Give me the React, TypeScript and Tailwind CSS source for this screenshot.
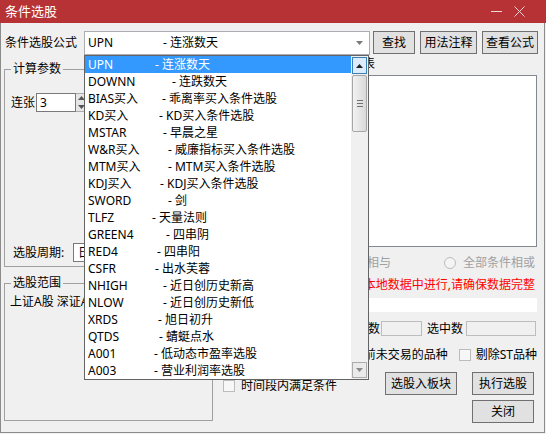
import React from "react";

// 公式列表: [代码, 说明, 说明的横向位置]
const formulas: [string, string, number][] = [
  ["UPN", "连涨数天", 155],
  ["DOWNN", "连跌数天", 172],
  ["BIAS买入", "乖离率买入条件选股", 162],
  ["KD买入", "KD买入条件选股", 159],
  ["MSTAR", "早晨之星", 163],
  ["W&R买入", "威廉指标买入条件选股", 168],
  ["MTM买入", "MTM买入条件选股", 168],
  ["KDJ买入", "KDJ买入条件选股", 160],
  ["SWORD", "剑", 168],
  ["TLFZ", "天量法则", 152],
  ["GREEN4", "四串阴", 166],
  ["RED4", "四串阳", 157],
  ["CSFR", "出水芙蓉", 155],
  ["NHIGH", "近日创历史新高", 163],
  ["NLOW", "近日创历史新低", 163],
  ["XRDS", "旭日初升", 158],
  ["QTDS", "蜻蜓点水", 159],
  ["A001", "低动态市盈率选股", 154],
  ["A003", "营业利润率选股", 154],
];

function Tri({ up, color }: { up?: boolean; color: string }) {
  return (
    <svg width="7" height="4" viewBox="0 0 7 4">
      <polygon points={up ? "0,4 3.5,0 7,4" : "0,0 7,0 3.5,4"} fill={color} />
    </svg>
  );
}

function Btn({ label, className }: { label: string; className: string }) {
  return (
    <button
      className={
        "h-[23px] border border-[#707070] bg-[#e1e1e1] text-[12px] leading-none text-black flex items-center justify-center " +
        className
      }
    >
      {label}
    </button>
  );
}

function CheckBox({ className }: { className?: string }) {
  return (
    <span
      className={
        "inline-block w-[12px] h-[12px] border border-[#bcbcbc] bg-[#f7f7f7] shrink-0 " +
        (className ?? "")
      }
    />
  );
}

function Radio({ className }: { className?: string }) {
  return (
    <span
      className={
        "inline-block w-[12px] h-[12px] rounded-full border border-[#bcbcbc] bg-[#f4f4f4] shrink-0 " +
        (className ?? "")
      }
    />
  );
}

function DropList() {
  return (
    <div className="absolute left-[84px] top-[55px] w-[285px] h-[325px] border border-[#646464] bg-white flex">
      <div className="flex-1">
        {formulas.map(([code, desc, x], i) => (
          <div
            key={code}
            className={
              "h-[17px] leading-[17px] flex whitespace-nowrap pl-[3px] " +
              (i === 0 ? "bg-[#3399ff] text-white" : "text-black")
            }
          >
            <span className="inline-block shrink-0" style={{ width: x - 88 }}>
              {code}
            </span>
            <span>- {desc}</span>
          </div>
        ))}
      </div>
      <div className="w-[17px] bg-[#f0f0f0] flex flex-col py-[1px]">
        <div className="h-[17px] mx-[1px] border border-[#3c7fb1] bg-[#dcecfc] flex items-center justify-center">
          <Tri up color="#222" />
        </div>
        <div className="h-[57px] mx-[1px] mt-[1px] rounded-[2px] border border-[#a6a6a6] bg-gradient-to-r from-[#f2f2f2] to-[#d9d9d9] flex flex-col items-center justify-center gap-[2px]">
          <span className="w-[6px] h-px bg-[#707070]" />
          <span className="w-[6px] h-px bg-[#707070]" />
          <span className="w-[6px] h-px bg-[#707070]" />
        </div>
        <div className="flex-1" />
        <div className="h-[16px] mx-[1px] border border-[#acacac] bg-[#eaeaea] flex items-center justify-center">
          <Tri color="#8a8a8a" />
        </div>
      </div>
    </div>
  );
}

export default function App() {
  return (
    <div className="relative w-[546px] h-[434px] bg-[#f0f0f0] overflow-hidden text-[12px] text-black font-['Noto_Sans','Noto_Sans_CJK_SC',sans-serif]">
      {/* 标题栏 */}
      <div className="h-[23px] bg-[#b73235] flex items-center pl-[5px] pr-[21px] text-white">
        <span className="text-[13px]">条件选股</span>
        <div className="ml-auto flex items-center gap-[12px]">
          <span className="block w-[11px] h-px bg-[#f3d6d6]" />
          <svg width="11" height="11" viewBox="0 0 11 11">
            <path d="M0.5 0.5 L10.5 10.5 M10.5 0.5 L0.5 10.5" stroke="#f3d6d6" strokeWidth="1" />
          </svg>
        </div>
      </div>

      <div className="w-[545px] h-[410px] border-x border-b border-[#8c8c8c] flex flex-col">
        {/* 公式选择行 */}
        <div className="mt-[8px] flex items-start h-[24px]">
          <span className="ml-[4px] w-[79px] leading-[24px]">条件选股公式</span>
          <div className="w-[286px] h-[24px] border border-[#abadb3] bg-white flex items-center">
            <span className="pl-[3px] inline-block w-[78px]">UPN</span>
            <span>- 连涨数天</span>
            <span className="ml-auto mr-[6px]">
              <Tri color="#7a7a7a" />
            </span>
          </div>
          <Btn label="查找" className="ml-[3px] w-[42px]" />
          <Btn label="用法注释" className="ml-[5px] w-[57px]" />
          <Btn label="查看公式" className="ml-[5px] w-[56px]" />
        </div>

        <div className="flex">
          {/* 左侧 */}
          <div className="ml-[3px] w-[209px] flex flex-col">
            <fieldset className="mt-[6px] h-[206px] border border-[#a0a0a0]">
              <legend className="ml-[6px] px-[2px] leading-[16px]">计算参数</legend>
              <div className="mt-[16px] h-[19px] flex items-center">
                <span className="ml-[6px] w-[25px]">连张</span>
                <div className="w-[40px] h-[19px] border border-[#7a7a7a] bg-white pl-[3px] leading-[17px]">3</div>
                <div className="w-[12px] h-[19px] border border-l-0 border-[#acacac] bg-[#e6e6e6] flex flex-col items-center justify-around">
                  <Tri up color="#555" />
                  <Tri color="#555" />
                </div>
              </div>
              <div className="mt-[131px] h-[19px] flex items-center">
                <span className="ml-[8px] w-[60px]">选股周期:</span>
                <div className="w-[130px] h-[19px] border border-[#7a7a7a] bg-white pl-[4px] leading-[17px]">日线</div>
              </div>
            </fieldset>
            <fieldset className="mt-[8px] h-[146px] border border-[#a0a0a0]">
              <legend className="ml-[6px] px-[2px] leading-[16px]">选股范围</legend>
              <div className="mt-[3px] ml-[5px] leading-[16px] whitespace-nowrap">上证A股 深证A股 创业板</div>
            </fieldset>
          </div>

          {/* 右侧 */}
          <div className="ml-[10px] w-[314px] flex flex-col">
            <div className="mt-[1px] h-[16px] leading-[16px] ml-[80px]">选股条件列表</div>
            <div className="mt-[3px] ml-[80px] h-[172px] border border-[#828790] bg-white" />
            <div className="mt-[8px] h-[16px] flex items-center text-[#a0a0a0]">
              <Radio className="ml-[80px]" />
              <span className="ml-[4px]">全部条件相与</span>
              <Radio className="ml-[53px]" />
              <span className="ml-[7px]">全部条件相或</span>
            </div>
            <div className="mt-[6px] h-[16px] leading-[16px] text-right pr-[2px] text-[#ff0000] whitespace-nowrap">
              选股在本地数据中进行,请确保数据完整
            </div>
            <div className="mt-[5px] ml-[80px] h-[14px] bg-white" />
            <div className="mt-[9px] h-[15px] flex items-center justify-end pr-[1px]">
              <span>品种数</span>
              <span className="ml-[1px] w-[41px] h-[15px] border border-[#bdbdbd] bg-[#f0f0f0]" />
              <span className="ml-[5px]">选中数</span>
              <span className="ml-[3px] w-[70px] h-[15px] border border-[#bdbdbd] bg-[#f0f0f0]" />
            </div>
            <div className="mt-[12px] h-[14px] flex items-center justify-end">
              <span>剔除当前未交易的品种</span>
              <CheckBox className="ml-[11px]" />
              <span className="ml-[5px]">剔除ST品种</span>
            </div>
            <div className="mt-[10px] flex items-start">
              <div className="mt-[8px] flex items-center">
                <CheckBox />
                <span className="ml-[6px] leading-[12px]">时间段内满足条件</span>
              </div>
              <Btn label="选股入板块" className="ml-auto w-[72px] h-[22px]" />
              <Btn label="执行选股" className="ml-[15px] mr-[3px] w-[62px] h-[22px]" />
            </div>
            <div className="mt-[5px] flex justify-end">
              <Btn label="关闭" className="mr-[3px] w-[62px] h-[22px]" />
            </div>
          </div>
        </div>
      </div>

      <DropList />
    </div>
  );
}
